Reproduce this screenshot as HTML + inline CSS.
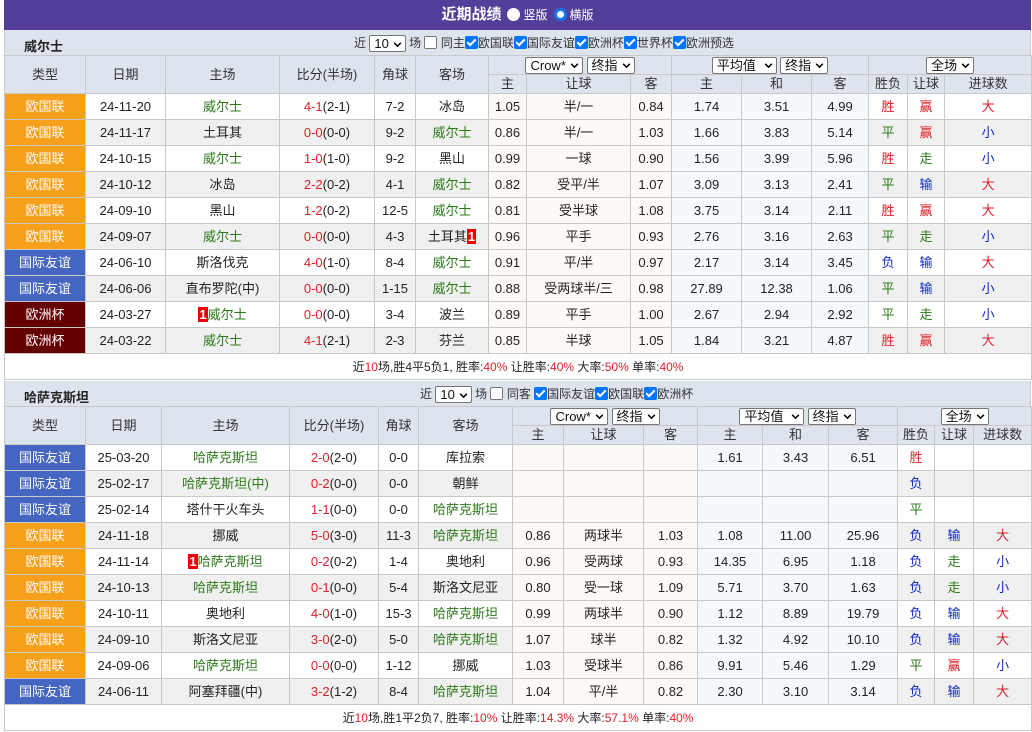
<!DOCTYPE html>
<html><head><meta charset="utf-8"><style>
*{box-sizing:border-box}
body{margin:0;width:1032px;height:732px;background:#fff;font-family:"Liberation Sans","Noto Sans CJK SC",sans-serif;font-size:13px;color:#222;overflow:hidden}
.wrap{position:absolute;left:4px;top:0;width:1027px}
.top{height:30px;background:#533f9a;color:#fff;text-align:center;line-height:30px;font-size:15px;font-weight:bold}
.top .rd{display:inline-block;width:13px;height:13px;border-radius:50%;background:#fff;vertical-align:-2px;margin:0 3px 0 6px}
.top .rd.on{background:#fff;border:3px solid #1a73e8;box-shadow:inset 0 0 0 2px #fff}
.top small{font-size:12px;font-weight:normal}
.sec{height:25px;background:#dde4ee;position:relative;border-left:1px solid #c8c8c8;border-right:1px solid #c8c8c8}
.sec b{position:absolute;left:19px;top:6px;font-size:13px}
.sec .ctl{position:absolute;top:4px;font-size:12px;white-space:nowrap;color:#333}
.sel{display:inline-block;height:17px;border:1px solid #767676;border-radius:2px;background:#fff;line-height:15px;padding:0 3px 0 4px;font-size:13px;vertical-align:middle;color:#111}
.sel i{display:inline-block;width:9px;height:6px;margin-left:4px;vertical-align:1px;background:no-repeat center/contain url("data:image/svg+xml;utf8,<svg xmlns='http://www.w3.org/2000/svg' viewBox='0 0 10 6'><path d='M1 1l4 4 4-4' fill='none' stroke='black' stroke-width='1.8'/></svg>")}
.cb{display:inline-block;width:13px;height:13px;border-radius:2px;background:#0075ff;vertical-align:-2px;position:relative}
.cb:after{content:"";position:absolute;left:4px;top:1px;width:3px;height:7px;border:solid #fff;border-width:0 2px 2px 0;transform:rotate(45deg)}
.cb.off{background:#fff;border:1px solid #767676}.cb.off:after{display:none}
table{border-collapse:collapse;table-layout:fixed;width:1027px}
td,th{border:1px solid #c8c8c8;text-align:center;padding:0;font-weight:normal;white-space:nowrap;overflow:hidden;line-height:16px}
thead td{background:#dde4ee;height:19px;color:#333}
tbody td{height:26px}
tbody tr:nth-child(even) td{background:#f0f0f0}
tbody td.t{color:#fff}
tbody tr td.o1{background:#fdf9f6!important}
tbody tr td.o2{background:#f3f9fd!important}
.or{background:#f7a01b!important}.bl{background:#4566c0!important}.mr{background:#650000!important}
.g{color:#2b7a18}.r{color:#e0202a}.b{color:#1028c8}
.n{display:inline-block;background:#e00;color:#fff;font-weight:bold;padding:0 1px;line-height:15px}
.sum td{height:26px;background:#fff!important;font-size:12px}
.sum .r{color:#e0202a}
</style></head><body><div class="wrap">
<div class="top">近期战绩<span class="rd"></span><small>竖版</small><span class="rd on"></span><small>横版</small></div>
<div class="sec"><b>威尔士</b><span class="ctl" style="left:349px">近 <span class="sel">10<i></i></span> 场 <span class="cb off"></span> 同主<span class="cb"></span>欧国联<span class="cb"></span>国际友谊<span class="cb"></span>欧洲杯<span class="cb"></span>世界杯<span class="cb"></span>欧洲预选</span></div>
<table>
<colgroup><col style="width:81px"><col style="width:80px"><col style="width:114px"><col style="width:95px"><col style="width:41px"><col style="width:73px"><col style="width:38px"><col style="width:104px"><col style="width:41px"><col style="width:70px"><col style="width:70px"><col style="width:57px"><col style="width:39px"><col style="width:37px"><col style="width:87px"></colgroup>
<thead><tr><td rowspan="2">类型</td><td rowspan="2">日期</td><td rowspan="2">主场</td><td rowspan="2">比分(半场)</td><td rowspan="2">角球</td><td rowspan="2">客场</td><td colspan="3"><span class="sel">Crow*<i></i></span> <span class="sel">终指<i></i></span></td><td colspan="3"><span class="sel">平均值 <i></i></span> <span class="sel">终指<i></i></span></td><td colspan="3"><span class="sel">全场<i></i></span></td></tr>
<tr><td>主</td><td>让球</td><td>客</td><td>主</td><td>和</td><td>客</td><td>胜负</td><td>让球</td><td>进球数</td></tr></thead>
<tbody>
<tr><td class="t or">欧国联</td><td>24-11-20</td><td class="g">威尔士</td><td><span class="r">4-1</span>(2-1)</td><td>7-2</td><td>冰岛</td><td class="o1">1.05</td><td class="o1">半/一</td><td class="o1">0.84</td><td class="o2">1.74</td><td class="o2">3.51</td><td class="o2">4.99</td><td class="r">胜</td><td class="r">赢</td><td class="r">大</td></tr>
<tr><td class="t or">欧国联</td><td>24-11-17</td><td>土耳其</td><td><span class="r">0-0</span>(0-0)</td><td>9-2</td><td class="g">威尔士</td><td class="o1">0.86</td><td class="o1">半/一</td><td class="o1">1.03</td><td class="o2">1.66</td><td class="o2">3.83</td><td class="o2">5.14</td><td class="g">平</td><td class="r">赢</td><td class="b">小</td></tr>
<tr><td class="t or">欧国联</td><td>24-10-15</td><td class="g">威尔士</td><td><span class="r">1-0</span>(1-0)</td><td>9-2</td><td>黑山</td><td class="o1">0.99</td><td class="o1">一球</td><td class="o1">0.90</td><td class="o2">1.56</td><td class="o2">3.99</td><td class="o2">5.96</td><td class="r">胜</td><td class="g">走</td><td class="b">小</td></tr>
<tr><td class="t or">欧国联</td><td>24-10-12</td><td>冰岛</td><td><span class="r">2-2</span>(0-2)</td><td>4-1</td><td class="g">威尔士</td><td class="o1">0.82</td><td class="o1">受平/半</td><td class="o1">1.07</td><td class="o2">3.09</td><td class="o2">3.13</td><td class="o2">2.41</td><td class="g">平</td><td class="b">输</td><td class="r">大</td></tr>
<tr><td class="t or">欧国联</td><td>24-09-10</td><td>黑山</td><td><span class="r">1-2</span>(0-2)</td><td>12-5</td><td class="g">威尔士</td><td class="o1">0.81</td><td class="o1">受半球</td><td class="o1">1.08</td><td class="o2">3.75</td><td class="o2">3.14</td><td class="o2">2.11</td><td class="r">胜</td><td class="r">赢</td><td class="r">大</td></tr>
<tr><td class="t or">欧国联</td><td>24-09-07</td><td class="g">威尔士</td><td><span class="r">0-0</span>(0-0)</td><td>4-3</td><td>土耳其<span class="n">1</span></td><td class="o1">0.96</td><td class="o1">平手</td><td class="o1">0.93</td><td class="o2">2.76</td><td class="o2">3.16</td><td class="o2">2.63</td><td class="g">平</td><td class="g">走</td><td class="b">小</td></tr>
<tr><td class="t bl">国际友谊</td><td>24-06-10</td><td>斯洛伐克</td><td><span class="r">4-0</span>(1-0)</td><td>8-4</td><td class="g">威尔士</td><td class="o1">0.91</td><td class="o1">平/半</td><td class="o1">0.97</td><td class="o2">2.17</td><td class="o2">3.14</td><td class="o2">3.45</td><td class="b">负</td><td class="b">输</td><td class="r">大</td></tr>
<tr><td class="t bl">国际友谊</td><td>24-06-06</td><td>直布罗陀(中)</td><td><span class="r">0-0</span>(0-0)</td><td>1-15</td><td class="g">威尔士</td><td class="o1">0.88</td><td class="o1">受两球半/三</td><td class="o1">0.98</td><td class="o2">27.89</td><td class="o2">12.38</td><td class="o2">1.06</td><td class="g">平</td><td class="b">输</td><td class="b">小</td></tr>
<tr><td class="t mr">欧洲杯</td><td>24-03-27</td><td class="g"><span class="n">1</span>威尔士</td><td><span class="r">0-0</span>(0-0)</td><td>3-4</td><td>波兰</td><td class="o1">0.89</td><td class="o1">平手</td><td class="o1">1.00</td><td class="o2">2.67</td><td class="o2">2.94</td><td class="o2">2.92</td><td class="g">平</td><td class="g">走</td><td class="b">小</td></tr>
<tr><td class="t mr">欧洲杯</td><td>24-03-22</td><td class="g">威尔士</td><td><span class="r">4-1</span>(2-1)</td><td>2-3</td><td>芬兰</td><td class="o1">0.85</td><td class="o1">半球</td><td class="o1">1.05</td><td class="o2">1.84</td><td class="o2">3.21</td><td class="o2">4.87</td><td class="r">胜</td><td class="r">赢</td><td class="r">大</td></tr>
<tr class="sum"><td colspan="15">近<span class="r">10</span>场,胜4平5负1, 胜率:<span class="r">40%</span> 让胜率:<span class="r">40%</span> 大率:<span class="r">50%</span> 单率:<span class="r">40%</span></td></tr>
</tbody></table>
<div style="height:1px"></div>
<div class="sec"><b>哈萨克斯坦</b><span class="ctl" style="left:415px">近 <span class="sel">10<i></i></span> 场 <span class="cb off"></span> 同客 <span class="cb"></span>国际友谊<span class="cb"></span>欧国联<span class="cb"></span>欧洲杯</span></div>
<table>
<colgroup><col style="width:81px"><col style="width:76px"><col style="width:128px"><col style="width:89px"><col style="width:40px"><col style="width:94px"><col style="width:51px"><col style="width:80px"><col style="width:54px"><col style="width:65px"><col style="width:66px"><col style="width:69px"><col style="width:37px"><col style="width:39px"><col style="width:58px"></colgroup>
<thead><tr><td rowspan="2">类型</td><td rowspan="2">日期</td><td rowspan="2">主场</td><td rowspan="2">比分(半场)</td><td rowspan="2">角球</td><td rowspan="2">客场</td><td colspan="3"><span class="sel">Crow*<i></i></span> <span class="sel">终指<i></i></span></td><td colspan="3"><span class="sel">平均值 <i></i></span> <span class="sel">终指<i></i></span></td><td colspan="3"><span class="sel">全场<i></i></span></td></tr>
<tr><td>主</td><td>让球</td><td>客</td><td>主</td><td>和</td><td>客</td><td>胜负</td><td>让球</td><td>进球数</td></tr></thead>
<tbody>
<tr><td class="t bl">国际友谊</td><td>25-03-20</td><td class="g">哈萨克斯坦</td><td><span class="r">2-0</span>(2-0)</td><td>0-0</td><td>库拉索</td><td class="o1"></td><td class="o1"></td><td class="o1"></td><td class="o2">1.61</td><td class="o2">3.43</td><td class="o2">6.51</td><td class="r">胜</td><td></td><td></td></tr>
<tr><td class="t bl">国际友谊</td><td>25-02-17</td><td class="g">哈萨克斯坦(中)</td><td><span class="r">0-2</span>(0-0)</td><td>0-0</td><td>朝鲜</td><td class="o1"></td><td class="o1"></td><td class="o1"></td><td class="o2"></td><td class="o2"></td><td class="o2"></td><td class="b">负</td><td></td><td></td></tr>
<tr><td class="t bl">国际友谊</td><td>25-02-14</td><td>塔什干火车头</td><td><span class="r">1-1</span>(0-0)</td><td>0-0</td><td class="g">哈萨克斯坦</td><td class="o1"></td><td class="o1"></td><td class="o1"></td><td class="o2"></td><td class="o2"></td><td class="o2"></td><td class="g">平</td><td></td><td></td></tr>
<tr><td class="t or">欧国联</td><td>24-11-18</td><td>挪威</td><td><span class="r">5-0</span>(3-0)</td><td>11-3</td><td class="g">哈萨克斯坦</td><td class="o1">0.86</td><td class="o1">两球半</td><td class="o1">1.03</td><td class="o2">1.08</td><td class="o2">11.00</td><td class="o2">25.96</td><td class="b">负</td><td class="b">输</td><td class="r">大</td></tr>
<tr><td class="t or">欧国联</td><td>24-11-14</td><td class="g"><span class="n">1</span>哈萨克斯坦</td><td><span class="r">0-2</span>(0-2)</td><td>1-4</td><td>奥地利</td><td class="o1">0.96</td><td class="o1">受两球</td><td class="o1">0.93</td><td class="o2">14.35</td><td class="o2">6.95</td><td class="o2">1.18</td><td class="b">负</td><td class="g">走</td><td class="b">小</td></tr>
<tr><td class="t or">欧国联</td><td>24-10-13</td><td class="g">哈萨克斯坦</td><td><span class="r">0-1</span>(0-0)</td><td>5-4</td><td>斯洛文尼亚</td><td class="o1">0.80</td><td class="o1">受一球</td><td class="o1">1.09</td><td class="o2">5.71</td><td class="o2">3.70</td><td class="o2">1.63</td><td class="b">负</td><td class="g">走</td><td class="b">小</td></tr>
<tr><td class="t or">欧国联</td><td>24-10-11</td><td>奥地利</td><td><span class="r">4-0</span>(1-0)</td><td>15-3</td><td class="g">哈萨克斯坦</td><td class="o1">0.99</td><td class="o1">两球半</td><td class="o1">0.90</td><td class="o2">1.12</td><td class="o2">8.89</td><td class="o2">19.79</td><td class="b">负</td><td class="b">输</td><td class="r">大</td></tr>
<tr><td class="t or">欧国联</td><td>24-09-10</td><td>斯洛文尼亚</td><td><span class="r">3-0</span>(2-0)</td><td>5-0</td><td class="g">哈萨克斯坦</td><td class="o1">1.07</td><td class="o1">球半</td><td class="o1">0.82</td><td class="o2">1.32</td><td class="o2">4.92</td><td class="o2">10.10</td><td class="b">负</td><td class="b">输</td><td class="r">大</td></tr>
<tr><td class="t or">欧国联</td><td>24-09-06</td><td class="g">哈萨克斯坦</td><td><span class="r">0-0</span>(0-0)</td><td>1-12</td><td>挪威</td><td class="o1">1.03</td><td class="o1">受球半</td><td class="o1">0.86</td><td class="o2">9.91</td><td class="o2">5.46</td><td class="o2">1.29</td><td class="g">平</td><td class="r">赢</td><td class="b">小</td></tr>
<tr><td class="t bl">国际友谊</td><td>24-06-11</td><td>阿塞拜疆(中)</td><td><span class="r">3-2</span>(1-2)</td><td>8-4</td><td class="g">哈萨克斯坦</td><td class="o1">1.04</td><td class="o1">平/半</td><td class="o1">0.82</td><td class="o2">2.30</td><td class="o2">3.10</td><td class="o2">3.14</td><td class="b">负</td><td class="b">输</td><td class="r">大</td></tr>
<tr class="sum"><td colspan="15">近<span class="r">10</span>场,胜1平2负7, 胜率:<span class="r">10%</span> 让胜率:<span class="r">14.3%</span> 大率:<span class="r">57.1%</span> 单率:<span class="r">40%</span></td></tr>
</tbody></table>
</div></body></html>
